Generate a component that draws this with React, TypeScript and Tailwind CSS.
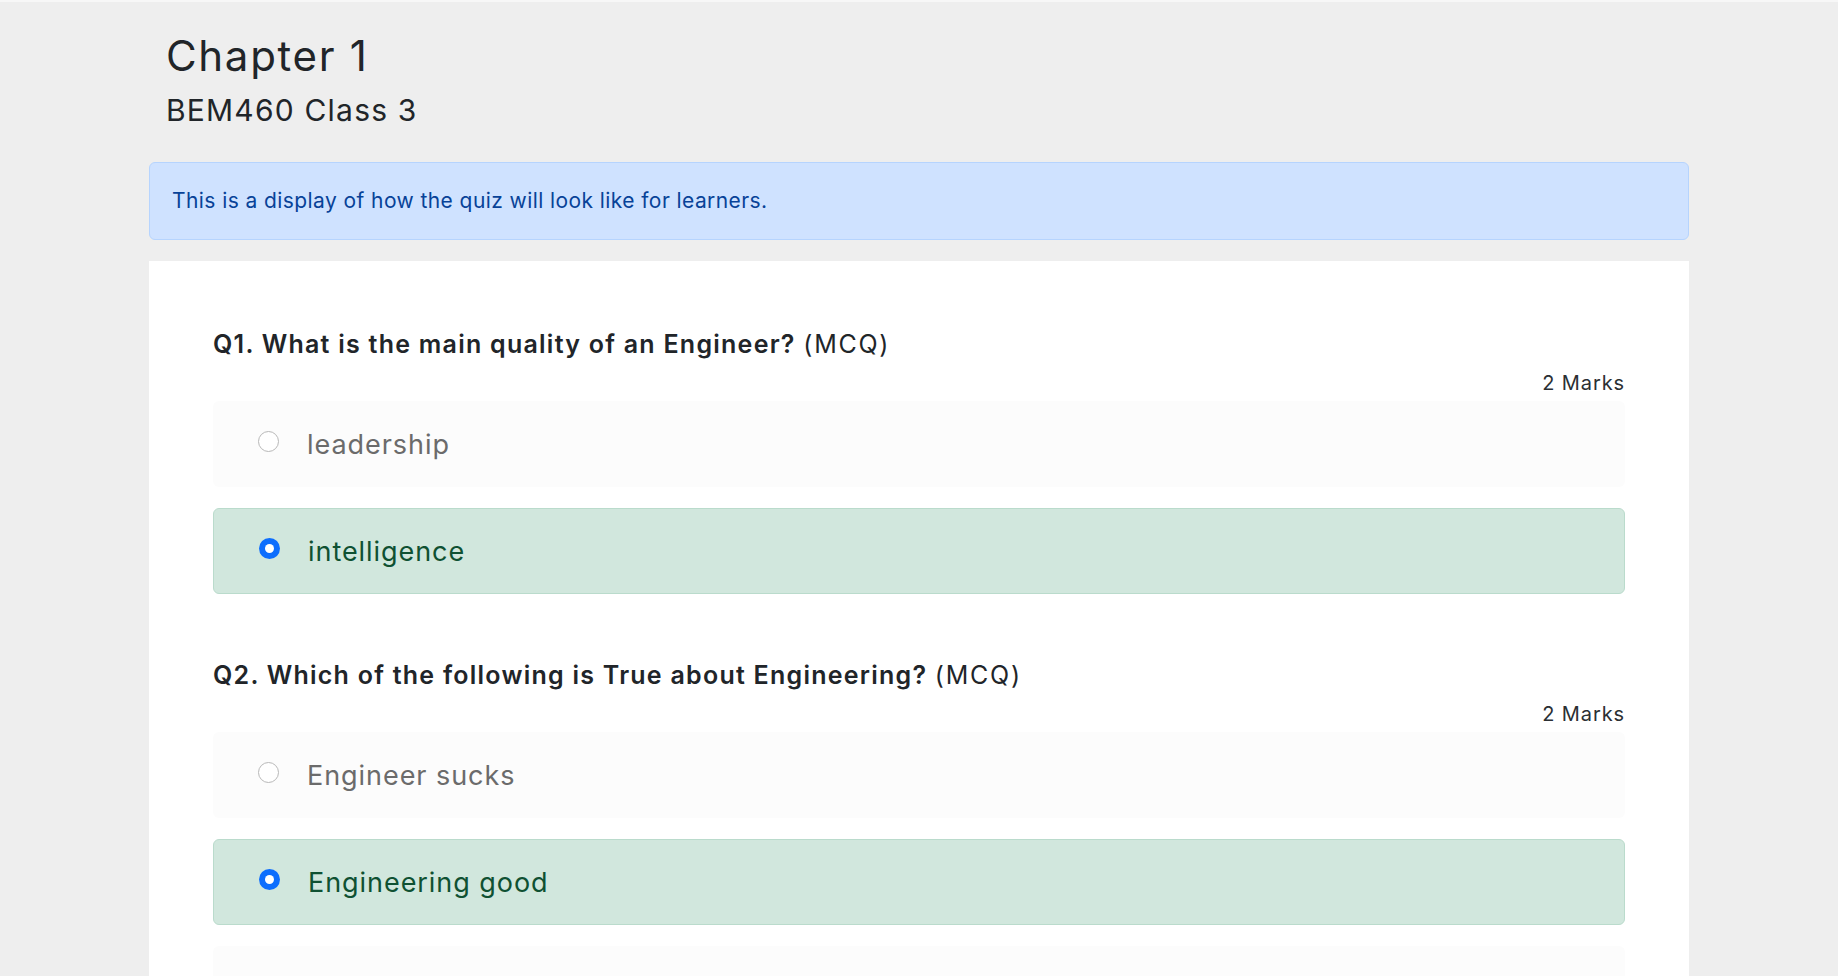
import React from 'react';

type Option = { label: string; selected?: boolean };
type Question = { no: number; text: string; type: string; marks: number; options: Option[] };

const QUESTIONS: Question[] = [
  {
    no: 1,
    text: 'What is the main quality of an Engineer?',
    type: 'MCQ',
    marks: 2,
    options: [{ label: 'leadership' }, { label: 'intelligence', selected: true }],
  },
  {
    no: 2,
    text: 'Which of the following is True about Engineering?',
    type: 'MCQ',
    marks: 2,
    // third option sits below the fold
    options: [{ label: 'Engineer sucks' }, { label: 'Engineering good', selected: true }, { label: '' }],
  },
];

function Radio({ checked }: { checked?: boolean }) {
  if (checked) {
    return (
      <span className="flex h-[21px] w-[21px] shrink-0 -mt-[6px] items-center justify-center rounded-full bg-[#0d6efd]">
        <span className="h-[9px] w-[9px] rounded-full bg-white" />
      </span>
    );
  }
  return <span className="h-[21px] w-[21px] shrink-0 -mt-[6px] rounded-full border border-[#b8b8b8] bg-white" />;
}

function OptionRow({ option }: { option: Option }) {
  return (
    <div
      className={`flex h-[86px] items-center gap-[28px] rounded-md pl-[45px] text-[27px] tracking-[0.035em] ${
        option.selected
          ? 'border border-[#badbcc] bg-[#d1e7dd] text-[#0f5132]'
          : 'bg-[#fcfcfc] text-[#6b6b6b]'
      }`}
    >
      <Radio checked={option.selected} />
      <span className="leading-[33px]">{option.label}</span>
    </div>
  );
}

function QuestionBlock({ q }: { q: Question }) {
  return (
    <div>
      <h4 className="text-[25px] leading-[29px] font-semibold tracking-[0.05em] text-[#212529]">
        Q{q.no}. {q.text} <span className="font-normal tracking-[0.07em]">({q.type})</span>
      </h4>
      <div className="mt-[12px] text-right text-[20px] leading-[24px] tracking-[0.045em] text-[#2b2f33]">
        {q.marks} Marks
      </div>
      <div className="mt-[6px] flex flex-col gap-[21px]">
        {q.options.map((o, i) => (
          <OptionRow key={i} option={o} />
        ))}
      </div>
    </div>
  );
}

export default function App() {
  return (
    <div className="min-h-screen bg-[#eeeeee] font-['Inter','Liberation_Sans',sans-serif]">
      <div className="h-[2px] bg-[#f7f7f7]" />
      <div className="mx-auto w-[1540px]">
        <div className="px-[17px] pt-[29px] text-[#212529]">
          <h1 className="text-[42px] leading-[50px] font-normal tracking-[0.04em]">Chapter 1</h1>
          <h2 className="mt-[11px] text-[30px] leading-[36px] font-normal tracking-[0.04em]">BEM460 Class 3</h2>
        </div>

        <div className="mt-[34px] flex h-[78px] items-center rounded-md border border-[#b6d4fe] bg-[#cfe2ff] px-[22px] text-[21px] leading-[24px] tracking-[0.02em] text-[#084298]">
          This is a display of how the quiz will look like for learners.
        </div>

        <div className="mt-[21px] flex flex-col gap-[67px] bg-white px-[64px] pt-[69px] pb-16">
          {QUESTIONS.map((q) => (
            <QuestionBlock key={q.no} q={q} />
          ))}
        </div>
      </div>
    </div>
  );
}
